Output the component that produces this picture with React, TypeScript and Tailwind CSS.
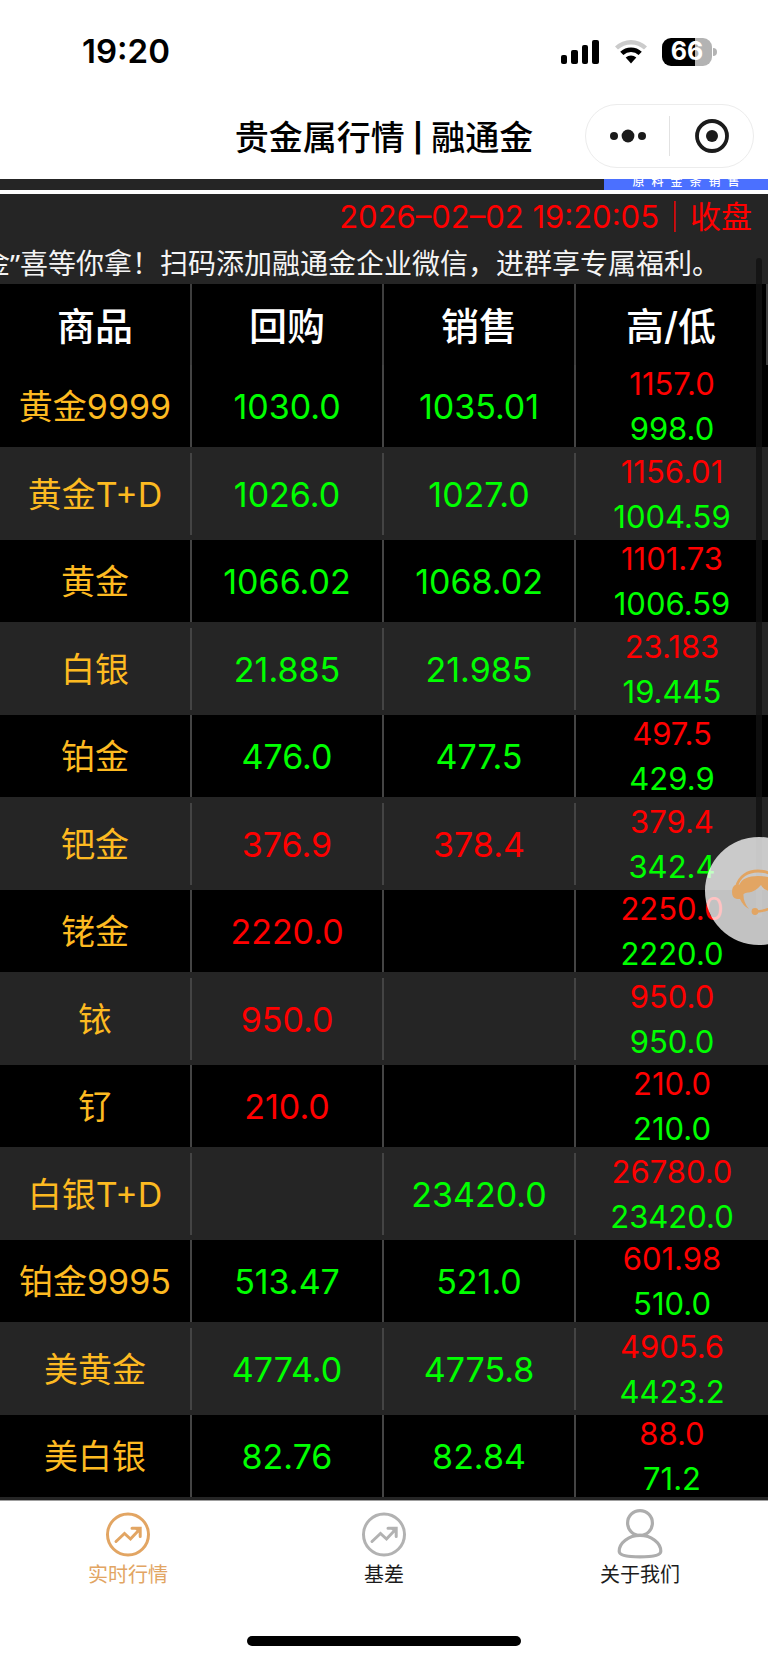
type Tone = 'up' | 'down';

interface Quote {
  name: string;
  buy: string;
  sell: string;
  high: string;
  low: string;
  tone: Tone;
}

const QUOTES: Quote[] = [
  { name: '黄金9999', buy: '1030.0', sell: '1035.01', high: '1157.0', low: '998.0', tone: 'down' },
  { name: '黄金T+D', buy: '1026.0', sell: '1027.0', high: '1156.01', low: '1004.59', tone: 'down' },
  { name: '黄金', buy: '1066.02', sell: '1068.02', high: '1101.73', low: '1006.59', tone: 'down' },
  { name: '白银', buy: '21.885', sell: '21.985', high: '23.183', low: '19.445', tone: 'down' },
  { name: '铂金', buy: '476.0', sell: '477.5', high: '497.5', low: '429.9', tone: 'down' },
  { name: '钯金', buy: '376.9', sell: '378.4', high: '379.4', low: '342.4', tone: 'up' },
  { name: '铑金', buy: '2220.0', sell: '', high: '2250.0', low: '2220.0', tone: 'up' },
  { name: '铱', buy: '950.0', sell: '', high: '950.0', low: '950.0', tone: 'up' },
  { name: '钌', buy: '210.0', sell: '', high: '210.0', low: '210.0', tone: 'up' },
  { name: '白银T+D', buy: '', sell: '23420.0', high: '26780.0', low: '23420.0', tone: 'down' },
  { name: '铂金9995', buy: '513.47', sell: '521.0', high: '601.98', low: '510.0', tone: 'down' },
  { name: '美黄金', buy: '4774.0', sell: '4775.8', high: '4905.6', low: '4423.2', tone: 'down' },
  { name: '美白银', buy: '82.76', sell: '82.84', high: '88.0', low: '71.2', tone: 'down' },
];

const HEADERS = ['商品', '回购', '销售', '高/低'];

const TONE_CLASS: Record<Tone, string> = {
  up: 'text-[#ff0000]',
  down: 'text-[#00ff00]',
};

function StatusBar() {
  return (
    <div className="flex h-[103px] items-center justify-between pr-[51px] pl-[82px]">
      <span className="text-[33px] leading-none font-semibold">19:20</span>
      <div className="flex items-center gap-[14px]">
        <svg width="40" height="26" viewBox="0 0 40 26" aria-hidden="true">
          <rect x="1" y="16" width="6" height="9" rx="2" />
          <rect x="11" y="11" width="7" height="14" rx="2" />
          <rect x="22" y="6" width="6" height="19" rx="2" />
          <rect x="32" y="1" width="7" height="24" rx="2" />
        </svg>
        <svg width="34" height="26" viewBox="0 0 34 26" aria-hidden="true">
          <path d="M1 7.6 A23 23 0 0 1 33 7.6 L30 10.6 A18.8 18.8 0 0 0 4 10.6 Z" fill="#cbcbcb" />
          <path d="M6.2 12.8 A15.6 15.6 0 0 1 27.8 12.8 L24.6 16 A11 11 0 0 0 9.4 16 Z" />
          <path d="M11.7 18.6 A8 8 0 0 1 22.3 18.6 L17 24.6 Z" />
        </svg>
        <div className="flex items-center gap-px">
          <div className="flex h-7 w-[50px] items-center justify-center rounded-[9px] bg-linear-to-r from-black from-67% to-[#b3b3b3] to-67%">
            <span className="text-[25px] leading-none font-bold text-white">66</span>
          </div>
          <div className="h-2 w-1 rounded-r-full bg-[#b3b3b3]" />
        </div>
      </div>
    </div>
  );
}

function NavBar() {
  return (
    <div className="relative flex h-[76px] items-center justify-center pb-[6px]">
      <h1 className="flex items-center gap-2 text-[34px] leading-none font-medium">
        贵金属行情<span className="text-[28px] leading-none font-bold">|</span>融通金
      </h1>
      <div className="absolute top-px right-[14px] flex h-16 w-[169px] items-center rounded-full border border-[#ececec]">
        <button type="button" aria-label="更多" className="flex flex-1 justify-center">
          <svg width="38" height="14" viewBox="0 0 38 14" fill="#1b1b1b">
            <circle cx="5" cy="7" r="4" />
            <circle cx="19" cy="7" r="6.4" />
            <circle cx="33" cy="7" r="4" />
          </svg>
        </button>
        <span className="h-10 w-px bg-[#e2e2e2]" />
        <button type="button" aria-label="关闭" className="flex flex-1 justify-center">
          <svg width="36" height="36" viewBox="0 0 36 36">
            <circle cx="18" cy="18" r="15" fill="none" stroke="#1b1b1b" strokeWidth="3.8" />
            <circle cx="18" cy="18" r="6" fill="#1b1b1b" />
          </svg>
        </button>
      </div>
    </div>
  );
}

// Bottom edge of the banner that has scrolled under the nav bar
function BannerStrip() {
  return (
    <div className="flex h-[11px] justify-end bg-[#252525]">
      <div className="flex w-[164px] items-end justify-center gap-[7px] overflow-hidden bg-[#4b70ff] pb-[2px] text-[12px] leading-[12px] font-medium text-white">
        {['原', '料', '金', '条', '销', '售'].map((char) => (
          <span key={char}>{char}</span>
        ))}
      </div>
    </div>
  );
}

function QuoteTable() {
  return (
    <table className="w-full table-fixed border-collapse text-center">
      <thead>
        <tr className="bg-black">
          {HEADERS.map((title) => (
            <th key={title} scope="col" className="p-0 text-[38px] font-medium text-white">
              <div className="flex h-[81px] items-center justify-center border-r-2 border-[#3e3e3e] pt-1">{title}</div>
            </th>
          ))}
        </tr>
      </thead>
      <tbody className="text-[34px] leading-none">
        {QUOTES.map((quote) => (
          <tr key={quote.name} className="h-[82px] bg-black even:h-[93px] even:bg-[#252525]">
            <th scope="row" className="p-0 font-normal text-[#fdba21]">
              <div className="flex h-[82px] items-center justify-center border-r-2 border-[#444444] pt-[2px]">{quote.name}</div>
            </th>
            <td className={`p-0 ${TONE_CLASS[quote.tone]}`}>
              <div className="flex h-[82px] items-center justify-center border-r-2 border-[#444444] pt-[2px]">{quote.buy}</div>
            </td>
            <td className={`p-0 ${TONE_CLASS[quote.tone]}`}>
              <div className="flex h-[82px] items-center justify-center border-r-2 border-[#444444] pt-[2px]">{quote.sell}</div>
            </td>
            <td className="p-0 text-[31px] leading-[45px]">
              <div className="flex h-[82px] flex-col items-center justify-center">
                <span className="text-[#ff0000]">{quote.high}</span>
                <span className="text-[#00ff00]">{quote.low}</span>
              </div>
            </td>
          </tr>
        ))}
      </tbody>
    </table>
  );
}

function ServiceButton() {
  return (
    <button
      type="button"
      aria-label="在线客服"
      className="absolute top-[643px] -right-[45px] flex size-[108px] items-center justify-center rounded-full bg-white/76"
    >
      <svg width="56" height="56" viewBox="0 -2 56 56" fill="#e2a563">
        <path d="M5.5 22 C8 11 17 6 27 6 C38 6 46 11 48.5 22" fill="none" stroke="#e2a563" strokeWidth="2.8" />
        <path d="M4 20 Q1 22 1 27 Q1 33 6 34 L9 34 Q12 41 18 44 Q12 37 12.5 29 Q15 27 18 27.5 Q24 27 30 20 Q33 26 40 26 L42 28 Q42 37 37 43 Q44 40 46 34 L50 33 Q53 31 53 27 Q53 22 49 20 Q44 11 27 11 Q12 11 8.5 19.5 Z" />
        <path d="M47 34 Q43 46 24 46.5" fill="none" stroke="#e2a563" strokeWidth="2.4" />
        <circle cx="24" cy="46.5" r="3.4" />
      </svg>
    </button>
  );
}

function TrendIcon() {
  return (
    <svg width="50" height="50" viewBox="0 0 50 50" fill="none" stroke="currentColor" strokeWidth="3" aria-hidden="true">
      <circle cx="25" cy="25.5" r="20.5" />
      <path d="M13 32.5 L21.5 24.5 L27.5 30 L36 21" strokeLinecap="round" />
      <path d="M29 19.3 H37.2 V27.5" strokeLinecap="round" />
      <path d="M31.5 19.5 H37.4 V25.4 Z" fill="currentColor" stroke="none" />
    </svg>
  );
}

function PersonIcon() {
  return (
    <svg width="50" height="50" viewBox="0 0 50 50" fill="none" stroke="currentColor" strokeWidth="3.2" aria-hidden="true">
      <circle cx="25" cy="14" r="12.4" />
      <path d="M25 26.4 C13.5 26.4 4.2 34 4.2 42.2 Q4.2 47.8 25 47.8 Q45.8 47.8 45.8 42.2 C45.8 34 36.5 26.4 25 26.4 Z" />
    </svg>
  );
}

function TabBar() {
  return (
    <nav className="border-t border-[#9f9f9f] bg-white">
      <div className="grid grid-cols-3 pt-2 text-[20px] leading-[28px] text-[#1c1c1c]">
        <a href="#quotes" aria-current="page" className="flex flex-col items-center gap-[2px] text-[#e2a563]">
          <TrendIcon />
          实时行情
        </a>
        <a href="#basis" className="flex flex-col items-center gap-[2px]">
          <span className="text-[#b2b2b2]">
            <TrendIcon />
          </span>
          基差
        </a>
        <a href="#about" className="flex flex-col items-center gap-[2px]">
          <span className="text-[#adadad]">
            <PersonIcon />
          </span>
          关于我们
        </a>
      </div>
      <div className="flex justify-center pt-[47px] pb-[17px]">
        <div className="h-[10px] w-[274px] rounded-full bg-black" />
      </div>
    </nav>
  );
}

export default function App() {
  return (
    <div className="min-h-screen overflow-hidden bg-white font-['Inter','Noto_Sans_CJK_SC',sans-serif] text-black">
      <header>
        <StatusBar />
        <NavBar />
      </header>
      <BannerStrip />
      <main className="relative mt-1 overflow-hidden bg-[#252525] pb-[3px]">
        <p className="pr-4 text-right text-[31px] leading-[46px] text-[#ff0000]">2026–02–02 19:20:05｜收盘</p>
        <div className="flex h-11 items-center justify-end overflow-hidden pt-1 pr-12 text-[28px] leading-none whitespace-nowrap text-[#f4f4f4]">
          金<span className="font-['Noto_Sans',sans-serif]">”</span>喜等你拿！扫码添加融通金企业微信，进群享专属福利。
        </div>
        <QuoteTable />
        <div className="absolute top-16 right-[6px] h-[660px] w-[6px] rounded-full bg-[#111111]/80" />
        <ServiceButton />
      </main>
      <TabBar />
    </div>
  );
}
